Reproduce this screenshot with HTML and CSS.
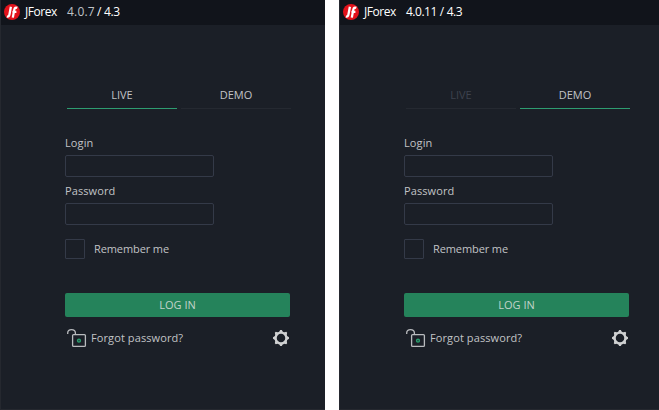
FILE: index.html
```
<!DOCTYPE html>
<html lang="en">
<head>
    <meta charset="UTF-8">
    <title>JForex login</title>
    <link rel="stylesheet" href="styles.css">
</head>
<body>
<!-- live -->
<div class="window">
    <div class="title-bar">
        <svg class="logo" viewBox="0 0 16 16">
            <circle cx="8" cy="8" r="8" fill="#e3121b"/>
            <path d="M6.9 2.8L5.4 10.8Q5 13 2.9 12.4M13.3 3.9Q10.8 3 10.3 5.6L8.8 13.6M8.4 7.8H12.4" fill="none" stroke="#fff" stroke-width="2.3"/>
        </svg>
        <span class="app-name">JForex</span>
        <span class="version version-old">4.0.7</span>
        <span class="platform">/ 4.3</span>
    </div>
    <div class="content">
        <div class="tabs">
            <div class="tab active">LIVE</div>
            <div class="tab">DEMO</div>
        </div>
        <form class="login-form">
            <label class="label" for="login1">Login</label>
            <input class="field" id="login1" type="text">
            <label class="label" for="pass1">Password</label>
            <input class="field" id="pass1" type="password">
            <label class="remember"><input class="check" type="checkbox"><span class="remember-text">Remember me</span></label>
            <button class="submit" type="button">LOG IN</button>
        </form>
        <div class="links">
            <svg class="lock" viewBox="0 0 20 20">
                <path d="M.7 6V5Q.7 1.7 4.5 1.7T8.4 5V6.5" fill="none" stroke="#b9bbbe" stroke-width="1.3"/>
                <rect x="5.6" y="6.6" width="12.8" height="11.8" rx="1" fill="none" stroke="#b9bbbe" stroke-width="1.3"/>
                <circle cx="12" cy="12.7" r="1.4" fill="none" stroke="#2a9d6e" stroke-width="1.5"/>
            </svg>
            <span class="forgot">Forgot password?</span>
            <svg class="gear" viewBox="-8 -8 16 16">
                <circle r="5.4" fill="none" stroke="#d0d1d2" stroke-width="2.3"/>
                <path d="M-1.9-6L-.8-8H.8L1.9-6M2.8-5.6L5.2-6.2 6.2-5.2 5.6-2.8M6-1.9L8-.8V.8L6 1.9M5.6 2.8L6.2 5.2 5.2 6.2 2.8 5.6M1.9 6L.8 8H-.8L-1.9 6M-2.8 5.6L-5.2 6.2-6.2 5.2-5.6 2.8M-6 1.9L-8 .8V-.8L-6-1.9M-5.6-2.8L-6.2-5.2-5.2-6.2-2.8-5.6" fill="#d0d1d2"/>
            </svg>
        </div>
    </div>
</div>
<!-- demo -->
<div class="window">
    <div class="title-bar">
        <svg class="logo" viewBox="0 0 16 16">
            <circle cx="8" cy="8" r="8" fill="#e3121b"/>
            <path d="M6.9 2.8L5.4 10.8Q5 13 2.9 12.4M13.3 3.9Q10.8 3 10.3 5.6L8.8 13.6M8.4 7.8H12.4" fill="none" stroke="#fff" stroke-width="2.3"/>
        </svg>
        <span class="app-name">JForex</span>
        <span class="version">4.0.11 / 4.3</span>
    </div>
    <div class="content">
        <div class="tabs">
            <div class="tab disabled">LIVE</div>
            <div class="tab active">DEMO</div>
        </div>
        <form class="login-form">
            <label class="label" for="login2">Login</label>
            <input class="field" id="login2" type="text">
            <label class="label" for="pass2">Password</label>
            <input class="field" id="pass2" type="password">
            <label class="remember"><input class="check" type="checkbox"><span class="remember-text">Remember me</span></label>
            <button class="submit" type="button">LOG IN</button>
        </form>
        <div class="links">
            <svg class="lock" viewBox="0 0 20 20">
                <path d="M.7 6V5Q.7 1.7 4.5 1.7T8.4 5V6.5" fill="none" stroke="#b9bbbe" stroke-width="1.3"/>
                <rect x="5.6" y="6.6" width="12.8" height="11.8" rx="1" fill="none" stroke="#b9bbbe" stroke-width="1.3"/>
                <circle cx="12" cy="12.7" r="1.4" fill="none" stroke="#2a9d6e" stroke-width="1.5"/>
            </svg>
            <span class="forgot">Forgot password?</span>
            <svg class="gear" viewBox="-8 -8 16 16">
                <circle r="5.4" fill="none" stroke="#d0d1d2" stroke-width="2.3"/>
                <path d="M-1.9-6L-.8-8H.8L1.9-6M2.8-5.6L5.2-6.2 6.2-5.2 5.6-2.8M6-1.9L8-.8V.8L6 1.9M5.6 2.8L6.2 5.2 5.2 6.2 2.8 5.6M1.9 6L.8 8H-.8L-1.9 6M-2.8 5.6L-5.2 6.2-6.2 5.2-5.6 2.8M-6 1.9L-8 .8V-.8L-6-1.9M-5.6-2.8L-6.2-5.2-5.2-6.2-2.8-5.6" fill="#d0d1d2"/>
            </svg>
        </div>
    </div>
</div>
</body>
</html>
```
FILE: styles.css
```
* {
    margin: 0;
    padding: 0;
    box-sizing: border-box;
}

body {
    display: flex;
    gap: 14px;
    height: 410px;
    overflow: hidden;
    background: #fff;
    font: 11px/16px "Open Sans", "Noto Sans", sans-serif;
    color: #c1c3c6;
}

.window {
    flex: none;
    width: 325px;
    height: 410px;
    background: #1b1f27;
    border-left: 1px solid #25282f;
    border-bottom: 1px solid #25282f;
}

/*title bar*/
.title-bar {
    display: flex;
    height: 25px;
    padding: 4px 0 0 3px;
    background: #11141b;
    color: #fff;
    font-size: 12px;
    white-space: nowrap;
}

.logo {
    width: 16px;
    height: 16px;
    margin-right: 5px;
}

.app-name {
    width: 42px;
    letter-spacing: -0.45px;
}

.version {
    letter-spacing: -0.5px;
    word-spacing: 0.4px;
}

.version-old {
    width: 30px;
    color: #bfc2c7;
    letter-spacing: 0.2px;
}

.platform {
    letter-spacing: -0.5px;
    word-spacing: 0.6px;
}

/*tabs*/
.content {
    padding: 58px 0 0 64px;
}

.tabs {
    display: flex;
    gap: 4px;
    margin-left: 2px;
}

.tab {
    width: 110px;
    height: 26px;
    padding-top: 4px;
    border-bottom: 1px solid #252931;
    text-align: center;
}

.tab.active {
    border-bottom-color: #2e9c71;
}

.tab.disabled {
    color: #3d424e;
}

/*form*/
.login-form {
    display: flex;
    flex-direction: column;
    width: 225px;
    padding-top: 26px;
}

.label {
    height: 20px;
    letter-spacing: 0.1px;
}

.field {
    width: 149px;
    height: 22px;
    margin-bottom: 6px;
    padding: 0 5px;
    border: 1px solid #343a48;
    border-radius: 2px;
    background: transparent;
    color: #c1c3c6;
    font: inherit;
}

.remember {
    display: flex;
    align-items: center;
    gap: 9px;
    height: 20px;
    margin-top: 8px;
}

.remember-text {
    letter-spacing: -0.1px;
}

.check {
    width: 20px;
    height: 20px;
    border: 1px solid #343a48;
    border-radius: 1px;
    -webkit-appearance: none;
    appearance: none;
}

.submit {
    height: 24px;
    margin-top: 34px;
    border: none;
    border-radius: 2px;
    background: #25835b;
    color: #c1d3ca;
    font: inherit;
}

/*bottom links*/
.links {
    display: flex;
    align-items: center;
    width: 225px;
    height: 20px;
    margin-top: 11px;
    padding: 0 1px 0 2px;
}

.lock {
    width: 20px;
    height: 20px;
    margin-right: 4px;
}

.forgot {
    letter-spacing: 0.1px;
}

.gear {
    width: 16px;
    height: 16px;
    margin-left: auto;
}
```
